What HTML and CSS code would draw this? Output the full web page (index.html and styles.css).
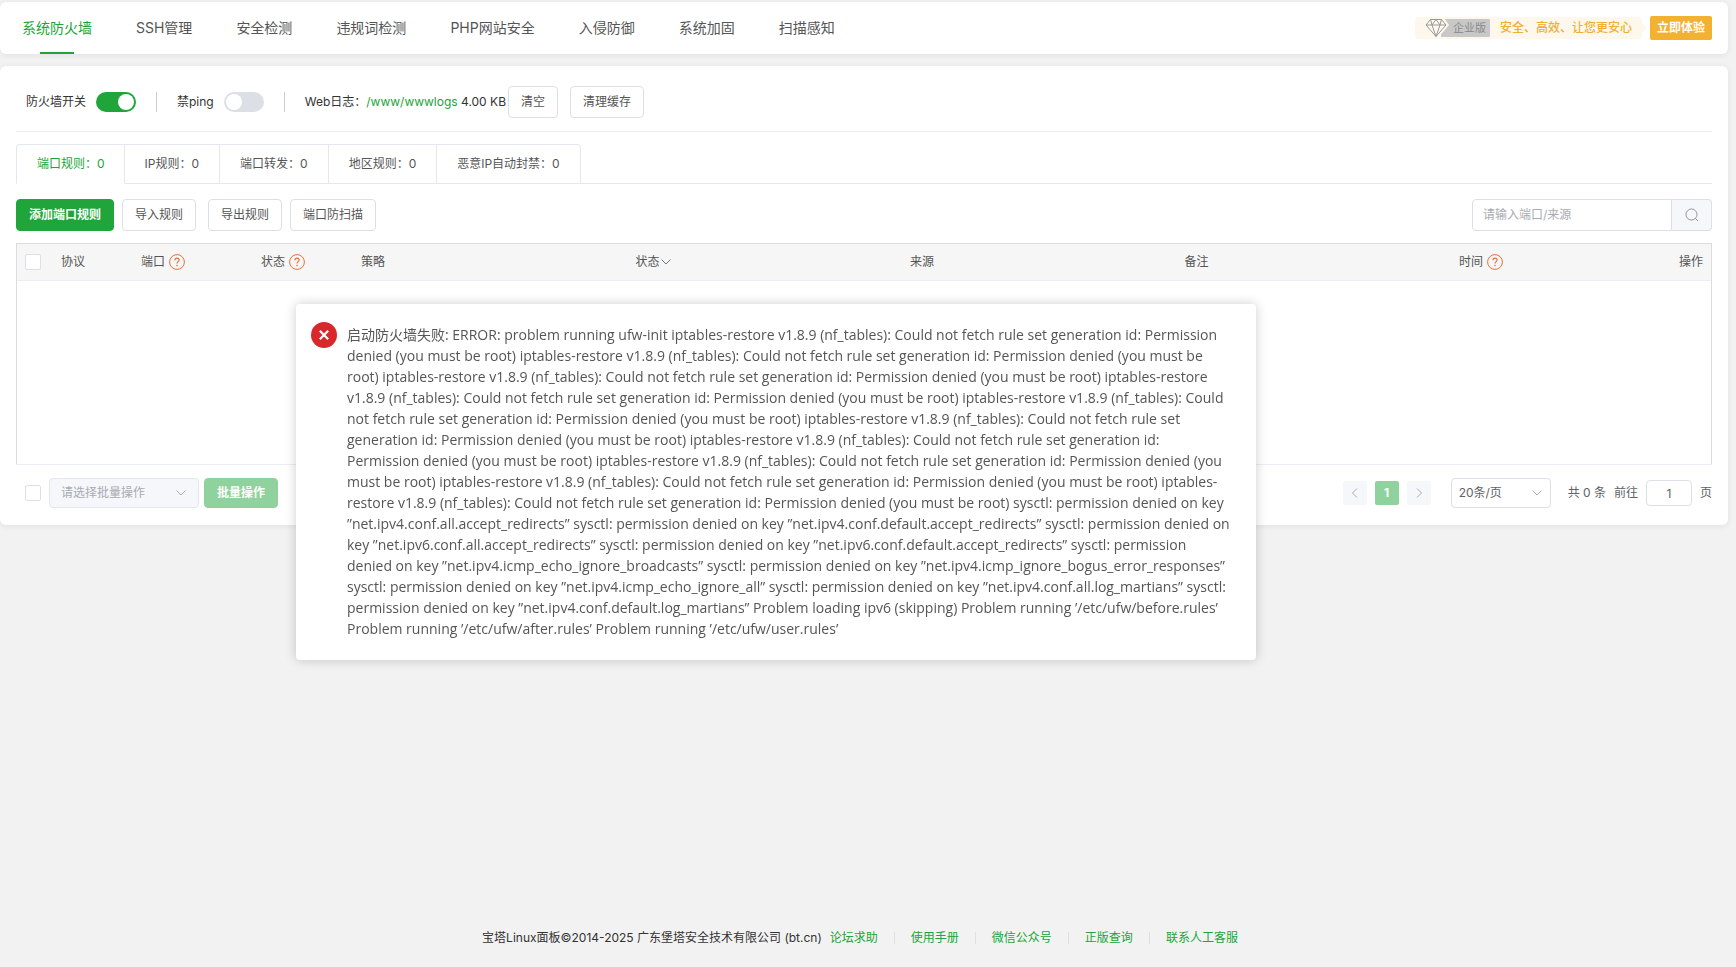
FILE: index.html
```html
<!DOCTYPE html>
<html lang="zh-CN">
<head>
<meta charset="utf-8">
<meta name="viewport" content="width=device-width, initial-scale=1">
<title>系统防火墙</title>
<link rel="stylesheet" href="styles.css">
</head>
<body>
<svg class="defs" width="0" height="0" aria-hidden="true">
  <symbol id="down" viewBox="0 0 12 12"><path d="M1.500 3.500 6 8l4.500-4.500" fill="none" stroke="currentColor"/></symbol>
  <symbol id="help" viewBox="0 0 16 16"><circle cx="8" cy="8" r="7.400" fill="none" stroke="currentColor"/><path d="M5.900 6.200C5.900 4.900 6.800 4.100 8 4.100s2.100.800 2.100 1.900c0 1.500-2.100 1.700-2.100 3.400" fill="none" stroke="currentColor" stroke-width="1.200"/><circle cx="8" cy="11.500" r=".8" fill="currentColor"/></symbol>
</svg>
<header class="topbar card">
  <nav class="topnav">
    <a class="topnav-item active" href="#">系统防火墙</a>
    <a class="topnav-item" href="#">SSH管理</a>
    <a class="topnav-item" href="#">安全检测</a>
    <a class="topnav-item" href="#">违规词检测</a>
    <a class="topnav-item" href="#">PHP网站安全</a>
    <a class="topnav-item" href="#">入侵防御</a>
    <a class="topnav-item" href="#">系统加固</a>
    <a class="topnav-item" href="#">扫描感知</a>
  </nav>
  <div class="promo">
    <div class="promo-note">
      <svg class="gem" viewBox="0 0 24 20" aria-hidden="true"><path class="gem-edge" d="M5 0h14l5 7-11 13H9z"/><path class="gem-line" d="M5.500 1.500h11l4.500 5.500-10 11.500L1 7zM1 7h20M5.500 1.500 7 7l4 11.500L15 7l1.500-5.500M7 7l4-5.500L15 7"/></svg>
      <span class="edition">企业版</span>
      <span class="slogan">安全、高效、让您更安心</span>
    </div>
    <button class="try" type="button">立即体验</button>
  </div>
</header>

<main class="panel card">
  <section class="settings">
    <label for="fw">防火墙开关</label>
    <input class="switch" id="fw" type="checkbox" role="switch" checked>
    <span class="sep"></span>
    <label for="ping">禁ping</label>
    <input class="switch" id="ping" type="checkbox" role="switch">
    <span class="sep"></span>
    <span class="log">Web日志：<a href="#">/www/wwwlogs</a> 4.00 KB</span>
    <button class="btn" type="button">清空</button>
    <button class="btn btn-cache" type="button">清理缓存</button>
  </section>

  <div class="tabs" role="tablist">
    <button class="tab active" type="button" role="tab" aria-selected="true">端口规则：0</button>
    <button class="tab" type="button" role="tab">IP规则：0</button>
    <button class="tab" type="button" role="tab">端口转发：0</button>
    <button class="tab" type="button" role="tab">地区规则：0</button>
    <button class="tab" type="button" role="tab">恶意IP自动封禁：0</button>
  </div>

  <div class="tools">
    <button class="btn primary" type="button">添加端口规则</button>
    <button class="btn btn-import" type="button">导入规则</button>
    <button class="btn" type="button">导出规则</button>
    <button class="btn" type="button">端口防扫描</button>
    <div class="search">
      <input type="text" placeholder="请输入端口/来源" aria-label="请输入端口/来源">
      <button type="button" aria-label="搜索"><svg width="14" height="14" viewBox="0 0 14 14" aria-hidden="true"><circle cx="6.500" cy="6.500" r="5.500" fill="none" stroke="currentColor"/><path d="m10.500 10.500 2.500 2.500" stroke="currentColor"/></svg></button>
    </div>
  </div>

  <div class="table-box">
    <table class="rules">
      <colgroup><col class="c-check"><col class="c-proto"><col class="c-port"><col class="c-state"><col><col><col><col><col class="c-time"><col class="c-action"></colgroup>
      <thead>
        <tr>
          <th><input class="check" type="checkbox" aria-label="全选"></th>
          <th>协议</th>
          <th><span class="head">端口<svg class="help"><use href="#help"/></svg></span></th>
          <th><span class="head">状态<svg class="help"><use href="#help"/></svg></span></th>
          <th>策略</th>
          <th><span class="head sort">状态<svg class="down"><use href="#down"/></svg></span></th>
          <th>来源</th>
          <th>备注</th>
          <th><span class="head">时间<svg class="help"><use href="#help"/></svg></span></th>
          <th class="right">操作</th>
        </tr>
      </thead>
    </table>
  </div>

  <div class="bottom">
    <input class="check" type="checkbox" aria-label="选择全部">
    <div class="select batch">
      <select aria-label="批量操作类型" disabled><option>请选择批量操作</option></select>
      <svg class="down"><use href="#down"/></svg>
    </div>
    <button class="btn batch-go" type="button" disabled>批量操作</button>
    <div class="pager">
      <button class="page" type="button" aria-label="上一页" disabled><svg width="12" height="12" viewBox="0 0 12 12"><path d="M8 1.500 3.500 6 8 10.500" fill="none" stroke="currentColor"/></svg></button>
      <button class="page current" type="button">1</button>
      <button class="page" type="button" aria-label="下一页" disabled><svg width="12" height="12" viewBox="0 0 12 12"><path d="M4 1.500 8.500 6 4 10.500" fill="none" stroke="currentColor"/></svg></button>
      <div class="select size">
        <select aria-label="每页条数"><option>20条/页</option></select>
        <svg class="down"><use href="#down"/></svg>
      </div>
      <span class="total">共 0 条</span>
      <label for="goto">前往</label>
      <input class="goto" id="goto" type="text" value="1">
      <span>页</span>
    </div>
  </div>
</main>

<footer class="footer">
  <span>宝塔Linux面板©2014-2025 广东堡塔安全技术有限公司 (bt.cn)</span>
  <nav class="links">
    <a href="#">论坛求助</a>
    <a href="#">使用手册</a>
    <a href="#">微信公众号</a>
    <a href="#">正版查询</a>
    <a href="#">联系人工客服</a>
  </nav>
</footer>

<div class="message" role="alert">
  <svg class="error" viewBox="0 0 26 26" aria-hidden="true"><circle cx="13" cy="13" r="13" fill="#d9282b"/><path d="m8.800 8.800 8.400 8.400m0-8.400-8.400 8.400" stroke="#fff" stroke-width="2.200"/></svg>
  <p>启动防火墙失败: ERROR: problem running ufw-init iptables-restore v1.8.9 (nf_tables): Could not fetch rule set generation id: Permission<br>
denied (you must be root) iptables-restore v1.8.9 (nf_tables): Could not fetch rule set generation id: Permission denied (you must be<br>
root) iptables-restore v1.8.9 (nf_tables): Could not fetch rule set generation id: Permission denied (you must be root) iptables-restore<br>
v1.8.9 (nf_tables): Could not fetch rule set generation id: Permission denied (you must be root) iptables-restore v1.8.9 (nf_tables): Could<br>
not fetch rule set generation id: Permission denied (you must be root) iptables-restore v1.8.9 (nf_tables): Could not fetch rule set<br>
generation id: Permission denied (you must be root) iptables-restore v1.8.9 (nf_tables): Could not fetch rule set generation id:<br>
Permission denied (you must be root) iptables-restore v1.8.9 (nf_tables): Could not fetch rule set generation id: Permission denied (you<br>
must be root) iptables-restore v1.8.9 (nf_tables): Could not fetch rule set generation id: Permission denied (you must be root) iptables-<br>
restore v1.8.9 (nf_tables): Could not fetch rule set generation id: Permission denied (you must be root) sysctl: permission denied on key<br>
”net.ipv4.conf.all.accept_redirects” sysctl: permission denied on key ”net.ipv4.conf.default.accept_redirects” sysctl: permission denied on<br>
key ”net.ipv6.conf.all.accept_redirects” sysctl: permission denied on key ”net.ipv6.conf.default.accept_redirects” sysctl: permission<br>
denied on key ”net.ipv4.icmp_echo_ignore_broadcasts” sysctl: permission denied on key ”net.ipv4.icmp_ignore_bogus_error_responses”<br>
sysctl: permission denied on key ”net.ipv4.icmp_echo_ignore_all” sysctl: permission denied on key ”net.ipv4.conf.all.log_martians” sysctl:<br>
permission denied on key ”net.ipv4.conf.default.log_martians” Problem loading ipv6 (skipping) Problem running ’/etc/ufw/before.rules’<br>
Problem running ’/etc/ufw/after.rules’ Problem running ’/etc/ufw/user.rules’</p>
</div>
</body>
</html>
```

FILE: styles.css
```css
* { box-sizing: border-box; }

body {
  margin: 0;
  padding: 2px 8px 0 0;
  min-height: 100vh;
  display: flex;
  flex-direction: column;
  background: #f2f2f2;
  color: #333;
  font: 12px/18px Inter, "Noto Sans CJK SC", sans-serif;
}

button, input, select { font: inherit; color: inherit; margin: 0; }
button { cursor: pointer; }
a { color: #20a53a; text-decoration: none; }
.defs { position: absolute; }

.card {
  background: #fff;
  border-radius: 6px;
  box-shadow: 0 1px 6px rgba(0, 0, 0, .08);
}

.topbar {
  display: flex;
  justify-content: space-between;
  align-items: center;
  height: 52px;
  padding-right: 16px;
}
.topnav { display: flex; align-self: stretch; }
.topnav-item {
  display: flex;
  flex-direction: column;
  justify-content: center;
  align-items: center;
  padding: 0 22px;
  color: #555;
  font-size: 14px;
  line-height: 20px;
}
.topnav-item.active { color: #20a53a; }
.topnav-item.active::before { content: ""; height: 2px; margin-bottom: auto; }
.topnav-item.active::after { content: ""; width: 34px; height: 2px; margin-top: auto; background: #20a53a; }

.promo { display: flex; align-items: center; }
.promo-note {
  position: relative;
  display: flex;
  align-items: center;
  height: 22px;
  padding: 0 10px;
  margin-right: 8px;
  border-radius: 4px;
  background: #fef8ec;
}
.promo-note::after {
  content: "";
  position: absolute;
  top: 6px;
  left: 100%;
  border: 5px solid transparent;
  border-left-color: #fef8ec;
}
.gem { width: 24px; height: 20px; z-index: 1; }
.gem-edge { fill: #fef8ec; }
.gem-line { fill: none; stroke: #999; stroke-linejoin: round; }
.edition {
  height: 18px;
  margin-left: -8px;
  padding: 0 4px 0 12px;
  border-radius: 1px;
  background: #c8c8c8;
  color: #888;
  font-size: 11px;
}
.slogan { margin-left: 10px; color: #f0ad34; font-weight: 500; }
.try {
  height: 24px;
  padding: 0 7px;
  border: 0;
  border-radius: 2px;
  background: #f3b132;
  color: #fff;
  font-weight: 700;
}

.panel { margin-top: 12px; padding: 0 16px 17px; }
.settings {
  display: flex;
  align-items: center;
  height: 66px;
  padding: 6px 10px 0;
  border-bottom: 1px solid #ebebeb;
}
.switch {
  appearance: none;
  width: 40px;
  height: 20px;
  margin-left: 10px;
  padding: 2px;
  border-radius: 10px;
  background: #dcdfe6;
}
.switch::before {
  content: "";
  display: block;
  width: 16px;
  height: 16px;
  border-radius: 50%;
  background: #fff;
}
.switch:checked { background: #20a53a; }
.switch:checked::before { margin-left: auto; }
.sep { width: 1px; height: 20px; margin: 0 20px; background: #ccc; }
.log { margin-right: 2px; }

.btn {
  height: 32px;
  padding: 0 12px;
  border: 1px solid #dcdfe6;
  border-radius: 4px;
  background: #fff;
  color: #555;
  white-space: nowrap;
}
.btn-cache { margin-left: 12px; }
.btn.primary { background: #20a53a; border-color: #20a53a; color: #fff; font-weight: 700; }

.tabs {
  display: flex;
  height: 40px;
  margin-top: 12px;
  border-bottom: 1px solid #e4e7ed;
}
.tab {
  height: 40px;
  padding: 0 20px;
  border: solid #e4e7ed;
  border-width: 1px 1px 1px 0;
  background: #fff;
  color: #555;
}
.tab:first-child { padding-right: 19px; border-left-width: 1px; border-top-left-radius: 4px; }
.tab:last-child { border-top-right-radius: 4px; }
.tab.active { color: #20a53a; border-bottom-color: #fff; }

.tools { display: flex; gap: 8px; margin-top: 15px; }
.btn-import { margin-right: 4px; }
.search { display: flex; width: 240px; height: 32px; margin-left: auto; }
.search input {
  flex: 1;
  min-width: 0;
  padding: 0 10px;
  border: 1px solid #dcdfe6;
  border-radius: 4px 0 0 4px;
}
.search input::placeholder { color: #a8abb2; }
.search button {
  display: grid;
  place-items: center;
  width: 40px;
  border: 1px solid #dcdfe6;
  border-left: 0;
  border-radius: 0 4px 4px 0;
  background: #f5f7fa;
  color: #909399;
}

.table-box {
  min-height: 222px;
  margin-top: 12px;
  border: 1px solid #ddd;
  border-bottom-color: #ebeef5;
}
.rules { width: 100%; table-layout: fixed; border-collapse: collapse; }
.rules th {
  height: 36px;
  padding: 0 8px;
  border-bottom: 1px solid #ebeef5;
  background: #f6f6f6;
  color: #555;
  font-weight: 400;
  text-align: left;
}
.rules .right { text-align: right; }
.c-check { width: 36px; }
.c-proto { width: 80px; }
.c-port { width: 120px; }
.c-state { width: 100px; }
.c-time { width: 140px; }
.c-action { width: 120px; }
.head { display: flex; align-items: center; gap: 4px; }
.head.sort { gap: 0; }
.help { width: 16px; height: 16px; color: #e8703a; }
.down { width: 12px; height: 12px; color: #777; }

.check {
  display: block;
  appearance: none;
  width: 16px;
  height: 16px;
  border: 1px solid #dcdfe6;
  border-radius: 2px;
  background: #fff;
}

.bottom { display: flex; align-items: center; margin-top: 13px; padding-left: 9px; color: #606266; }
.select { display: grid; align-items: center; height: 30px; }
.select select {
  grid-area: 1 / 1;
  appearance: none;
  width: 100%;
  height: 30px;
  border: 1px solid #dcdfe6;
  border-radius: 4px;
  background: #fff;
  opacity: 1;
}
.select .down {
  grid-area: 1 / 1;
  justify-self: end;
  color: #a8abb2;
  pointer-events: none;
}
.batch { width: 150px; margin: 0 5px 0 8px; }
.batch select { padding: 0 11px; background: #f5f7fa; border-color: #e4e7ed; color: #a8abb2; }
.batch .down { margin-right: 12px; }
.size { width: 100px; margin: 0 17px 0 20px; }
.size select { padding: 0 7px; }
.size .down { margin-right: 8px; }
.batch-go { height: 30px; border-color: #90d29d; background: #90d29d; color: #fff; font-weight: 700; }
.pager { display: flex; align-items: center; margin-left: auto; }
.page {
  display: grid;
  place-items: center;
  width: 24px;
  height: 24px;
  padding: 0;
  border: 0;
  border-radius: 2px;
  background: #f5f7fa;
  color: #a8abb2;
}
.page + .page { margin-left: 8px; }
.page.current { background: #90d29d; color: #fff; font-weight: 700; }
.total { margin-right: 8px; }
.goto {
  width: 46px;
  height: 26px;
  margin: 0 8px;
  border: 1px solid #dcdfe6;
  border-radius: 4px;
  text-align: center;
}

.footer {
  display: flex;
  justify-content: center;
  margin-top: auto;
  padding: 0 8px 20px 0;
}
.footer > span { margin-right: 8px; }
.links { display: flex; }
.links a + a { display: flex; align-items: center; }
.links a + a::before {
  content: "";
  width: 1px;
  height: 12px;
  margin: 0 16px;
  background: #dcdfe6;
}

.message {
  position: fixed;
  top: 304px;
  left: 50%;
  display: flex;
  gap: 10px;
  width: 960px;
  margin-left: -572px;
  padding: 20px 15px 21px;
  border-radius: 4px;
  background: #fff;
  box-shadow: 0 0 12px rgba(0, 0, 0, .2);
  color: #555;
  font-family: "Open Sans", "Noto Sans CJK SC", sans-serif;
  font-size: 14px;
  line-height: 21px;
}
.message p { margin: 0; white-space: nowrap; }
.error { flex: none; width: 26px; height: 26px; margin-top: -2px; }
```
